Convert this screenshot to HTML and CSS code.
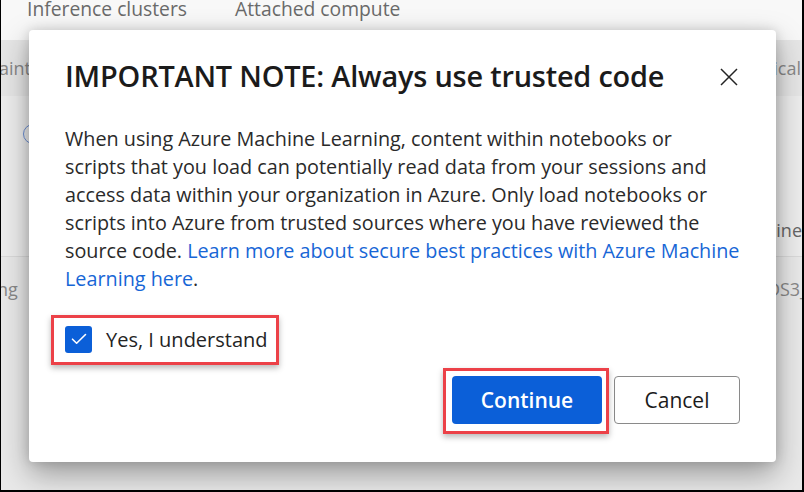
FILE: index.html
```html
<!DOCTYPE html>
<html>
<head>
<meta charset="utf-8">
<link rel="stylesheet" href="styles.css">
</head>
<body>
<div class="frame">
  <div class="page">
    <div class="tabs">
      <span class="tab">Inference clusters</span>
      <span class="tab">Attached compute</span>
    </div>
    <div class="band">
      <span class="band-left">aint</span>
      <span class="band-right">ical</span>
    </div>
    <div class="area">
      <div class="ring"></div>
      <div class="col-head">ine</div>
    </div>
    <div class="row">
      <span class="row-left">ng</span>
      <span class="row-right">DS3_</span>
    </div>
  </div>

  <div class="dialog" role="dialog">
    <div class="dlg-head">
      <h1 class="dlg-title">IMPORTANT NOTE: Always use trusted code</h1>
      <button class="close" aria-label="Close">
        <svg width="18" height="18" viewBox="0 0 18 18"><path d="M1 1 L17 17 M17 1 L1 17" stroke="#242424" stroke-width="1.5" fill="none"/></svg>
      </button>
    </div>
    <p class="dlg-text">When using Azure Machine Learning, content within notebooks or<br>scripts that you load can potentially read data from your sessions and<br>access data within your organization in Azure. Only load notebooks or<br>scripts into Azure from trusted sources where you have reviewed the<br>source code. <a class="link" href="#">Learn more about secure best practices with Azure Machine<br>Learning here</a>.</p>
    <div class="check-row">
      <label class="check highlight">
        <span class="box">
          <svg width="16" height="12" viewBox="0 0 16 12"><path d="M1.5 6.2 L5.6 10.2 L14.5 1.5" stroke="#fff" stroke-width="1.6" fill="none" stroke-linecap="round" stroke-linejoin="round"/></svg>
        </span>
        <span class="check-label">Yes, I understand</span>
      </label>
    </div>
    <div class="actions">
      <span class="btn-wrap"><button class="btn primary">Continue</button></span>
      <button class="btn secondary">Cancel</button>
    </div>
  </div>
</div>
</body>
</html>
```

FILE: styles.css
```css
* { box-sizing: border-box; }
html, body { margin: 0; padding: 0; }
body {
  width: 804px;
  height: 492px;
  overflow: hidden;
  font-family: "Open Sans", "Noto Sans", sans-serif;
  background: #fff;
}
.frame {
  position: relative;
  width: 804px;
  height: 492px;
  border-left: 1px solid #000;
  border-right: 2px solid #000;
  border-bottom: 2px solid #000;
  overflow: hidden;
  background: #f1f1f1;
}
.page {
  display: flex;
  flex-direction: column;
  height: 100%;
  color: #7a7a7a;
}
.tabs {
  height: 41px;
  display: flex;
  gap: 48px;
  padding-left: 26px;
  background: #f8f8f8;
  font-size: 19.3px;
  line-height: 20px;
  color: #6a6a6a;
  align-items: flex-start;
  margin-top: -1px;
}
.band {
  height: 56px;
  background: #e6e6e6;
  display: flex;
  justify-content: space-between;
  align-items: center;
  font-size: 18px;
  color: #888;
}
.band-left { margin-left: -2px; }
.band-right { margin-right: 1px; }
.area {
  height: 161px;
  background: #ededed;
  position: relative;
  border-bottom: 1px solid #dadada;
  display: flex;
  justify-content: flex-end;
  align-items: flex-end;
  padding-bottom: 14px;
}
.ring {
  position: absolute;
  left: 22px;
  top: 28px;
  width: 20px;
  height: 20px;
  border: 1.5px solid #6b8fd6;
  border-radius: 50%;
}
.col-head {
  font-size: 18px;
  color: #666;
}
.row {
  flex: 1;
  background: #e9e9e9;
  display: flex;
  justify-content: space-between;
  padding-top: 20px;
  font-size: 18px;
  color: #888;
}
.row-left { margin-left: -4px; }
.row-right { margin-right: -6px; }

.dialog {
  position: absolute;
  left: 28px;
  top: 30px;
  width: 747px;
  height: 432px;
  background: #fff;
  border-radius: 4px;
  box-shadow: 0 12px 30px rgba(0,0,0,0.34), 0 0 12px rgba(0,0,0,0.14);
  padding: 26px 36px 0 36px;
  color: #242424;
}
.dlg-head {
  display: flex;
  justify-content: space-between;
  align-items: flex-start;
}
.dlg-title {
  margin: 0;
  font-size: 28.9px;
  font-weight: 600;
  line-height: 40px;
  letter-spacing: -0.2px;
  color: #1b1b1b;
}
.close {
  border: 0;
  background: none;
  padding: 0;
  margin: 12px 2px 0 0;
  width: 18px;
  height: 18px;
  display: flex;
}
.dlg-text {
  margin: 29px -20px 0 0;
  font-size: 19.8px;
  line-height: 28px;
  color: #2a2a2a;
  white-space: nowrap;
}
.link { color: #1766d6; text-decoration: none; }
.check-row {
  margin-top: 26px;
  display: flex;
}
.check {
  display: flex;
  align-items: center;
  gap: 14px;
  position: relative;
  height: 40px;
}
.highlight::after, .btn-wrap::after {
  content: "";
  position: absolute;
  border: 3px solid #ec4148;
  box-shadow: 0 3px 6px rgba(0,0,0,0.28);
  pointer-events: none;
}
.check.highlight::after {
  left: -14px;
  right: -11px;
  top: -4px;
  bottom: -6px;
}
.box {
  width: 27px;
  height: 27px;
  border-radius: 3px;
  background: #0b5fd8;
  display: flex;
  align-items: center;
  justify-content: center;
}
.check-label {
  font-size: 20px;
  color: #242424;
}
.actions {
  display: flex;
  justify-content: flex-end;
  gap: 12px;
  margin-top: 17px;
}
.btn-wrap { position: relative; display: flex; }
.btn-wrap::after {
  left: -9px;
  right: -7px;
  top: -8px;
  bottom: -10px;
}
.btn {
  height: 48px;
  font-family: "Open Sans", "Noto Sans", sans-serif;
  font-size: 21px;
  border-radius: 4px;
}
.primary {
  width: 150px;
  background: #0b5fd8;
  color: #fff;
  border: 0;
  font-weight: 600;
}
.secondary {
  width: 126px;
  background: #fff;
  color: #1b1b1b;
  border: 1px solid #8a8a8a;
}
```
